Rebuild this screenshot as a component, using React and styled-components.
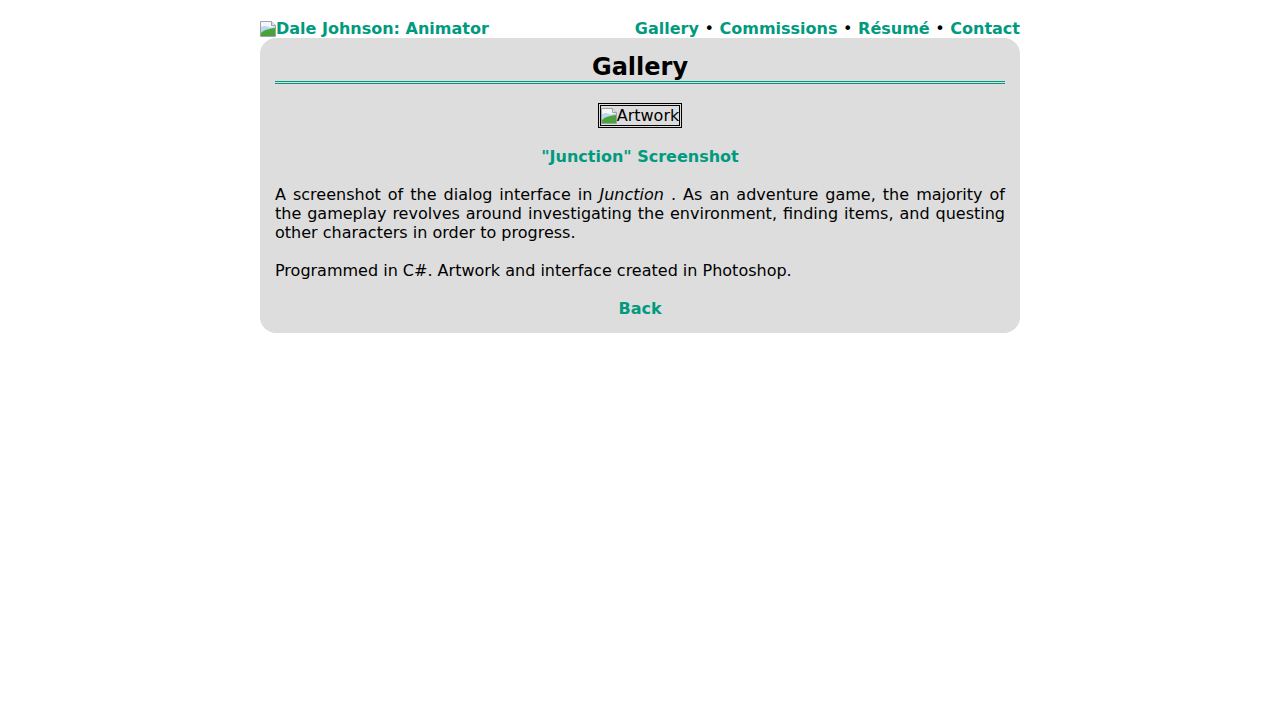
import React from 'react';
import styled, { createGlobalStyle } from 'styled-components';

const GlobalStyle = createGlobalStyle`
    body {
        margin: 0;
        background: #ffffff;
        font-family: "DejaVu Sans", Verdana, sans-serif;
        font-size: 16px;
        color: #000000;
    }
`;

const teal = '#009a7e';

function BrokenImage() {
    return (
        <StIcon width="16" height="16" viewBox="0 0 16 16">
            <path d="M0.5 0.5h11l4 4v11h-15z" fill="#f4f6f8" stroke="#9aa4ad" />
            <path d="M11.5 0.5v4h4" fill="#dfe4e8" stroke="#9aa4ad" />
            <path d="M1 6c2.5-1.2 5-1.2 7.5 0s4.5 0 6.5-1v10H1z" fill="#bcd7ee" />
            <path d="M1 15v-3c3.5-3.5 9-4.5 14-5v8z" fill="#47a33a" />
        </StIcon>
    );
}

function App() {
    return (
        <>
            <GlobalStyle />
            <StPage>
                <StHeader>
                    <StLogo href="#">
                        <BrokenImage />
                        Dale Johnson: Animator
                    </StLogo>
                    <StNav>
                        <StLink href="#">Gallery</StLink> <StDot>•</StDot> <StLink href="#">Commissions</StLink>{' '}
                        <StDot>•</StDot> <StLink href="#">Résumé</StLink> <StDot>•</StDot>{' '}
                        <StLink href="#">Contact</StLink>
                    </StNav>
                </StHeader>
                <StPanel>
                    <StTitle>Gallery</StTitle>
                    <StArtRow>
                        <StArtwork>
                            <BrokenImage />
                            Artwork
                        </StArtwork>
                    </StArtRow>
                    <StCaption>
                        <StLink href="#">"Junction" Screenshot</StLink>
                    </StCaption>
                    <StText>
                        A screenshot of the dialog interface in <i>Junction</i> . As an adventure game, the
                        majority of the gameplay revolves around investigating the environment, finding
                        items, and questing other characters in order to progress.
                    </StText>
                    <StText>Programmed in C#. Artwork and interface created in Photoshop.</StText>
                    <StCaption>
                        <StLink href="#">Back</StLink>
                    </StCaption>
                </StPanel>
            </StPage>
        </>
    );
}

export default App;

const StPage = styled.div`
    width: 760px;
    margin: 0 auto;
    padding-top: 19px;
`;

const StIcon = styled.svg`
    display: block;
    flex-shrink: 0;
    width: 16px;
    height: 16px;
`;

const StHeader = styled.div`
    display: flex;
    justify-content: space-between;
    align-items: center;
    height: 19px;
    line-height: 19px;
    font-weight: bold;
`;

const StLink = styled.a`
    color: ${teal};
    font-weight: bold;
    text-decoration: none;
`;

const StLogo = styled(StLink)`
    display: flex;
    align-items: center;
`;

const StNav = styled.div`
    white-space: pre;
`;

const StDot = styled.span`
    font-weight: normal;
`;

const StPanel = styled.div`
    background: #dddddd;
    border-radius: 16px;
    padding: 15px;
    line-height: 19px;
`;

const StTitle = styled.h2`
    margin: 0;
    padding-top: 1px;
    font-size: 24px;
    line-height: 27px;
    text-align: center;
    border-bottom: 3px double ${teal};
`;

const StArtRow = styled.div`
    display: flex;
    justify-content: center;
    margin-top: 19px;
`;

const StArtwork = styled.div`
    display: flex;
    align-items: center;
    border: 3px double #000000;
    line-height: 19px;
`;

const StCaption = styled.div`
    margin-top: 19px;
    text-align: center;
`;

const StText = styled.p`
    margin: 19px 0 0;
    text-align: justify;
`;
